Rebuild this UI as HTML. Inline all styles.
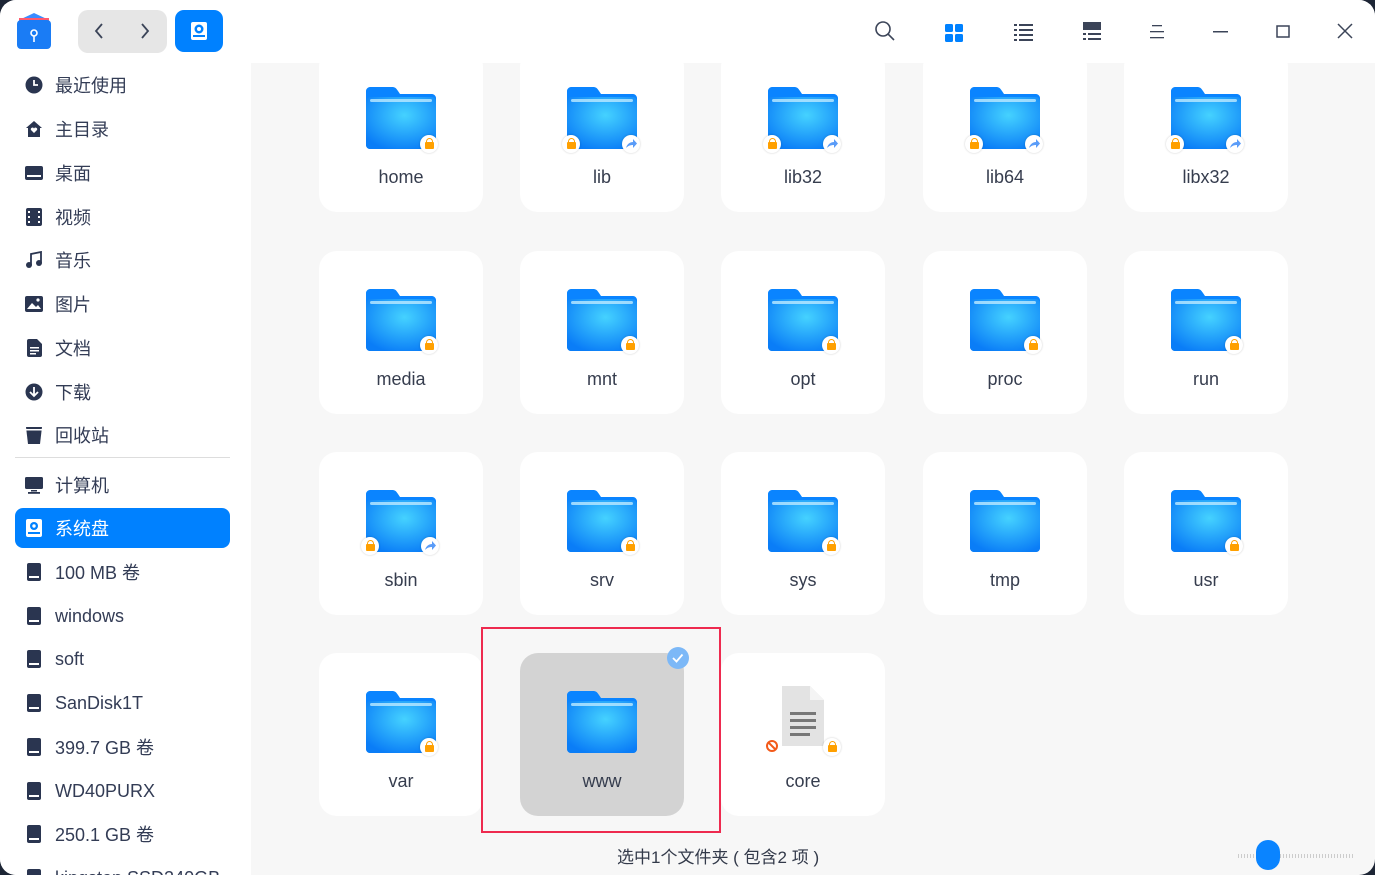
<!DOCTYPE html>
<html><head><meta charset="utf-8">
<style>
*{margin:0;padding:0;box-sizing:border-box}
html,body{width:1375px;height:875px;overflow:hidden;background:#1d2535;font-family:"Liberation Sans","Noto Sans CJK SC",sans-serif}
.win{position:absolute;left:0;top:0;width:1375px;height:875px;background:#f7f7f7;border-radius:16px;overflow:hidden}
.top{position:absolute;left:0;top:0;width:1375px;height:63px;background:#fff}
.side{position:absolute;left:0;top:63px;width:251px;height:812px;background:#fff}
.it{position:absolute;left:15px;width:215px;height:40px;display:flex;align-items:center;font-size:18px;color:#333c55}
.it .ic{width:18px;height:18px;margin-left:10px;margin-right:12px;display:flex;align-items:center;justify-content:center}
.it.sel{background:#0081ff;color:#fff;border-radius:8px}
.main{position:absolute;left:251px;top:63px;width:1124px;height:812px;overflow:hidden}
.card{position:absolute;width:164px;height:163px;background:#fff;border-radius:18px}
.card svg.f{position:absolute;left:47px;top:38px}
.card .l{position:absolute;left:0;width:164px;top:118px;text-align:center;font-size:18px;color:#363d4e}
.lock{position:absolute;width:18px;height:18px;border-radius:50%;background:#fff;box-shadow:0 0 2px rgba(0,0,0,.2)}
.lock:before{content:"";position:absolute;left:5px;top:7px;width:9px;height:7px;background:#ffa000;border-radius:1px}
.lock:after{content:"";position:absolute;left:6px;top:3px;width:5px;height:5px;border:1.5px solid #ffa000;border-bottom:none;border-radius:4px 4px 0 0}
.lnk{position:absolute;width:18px;height:18px;border-radius:50%;background:#fff;box-shadow:0 0 2px rgba(0,0,0,.2)}
</style></head><body>
<svg width="0" height="0" style="position:absolute">
<defs>
<radialGradient id="g" cx="0.55" cy="0.35" r="0.7"><stop offset="0" stop-color="#45d2ff"/><stop offset="1" stop-color="#0a7df7"/></radialGradient>
<symbol id="fold" viewBox="0 0 70 62">
<path d="M4 0h22c3 0 4 1 6 4l2 3h32c2 0 4 2 4 4v47c0 2-2 4-4 4H4c-2 0-4-2-4-4V4c0-2 2-4 4-4z" fill="#0a84ff"/>
<rect x="0" y="10" width="70" height="52" rx="4" fill="url(#g)"/>
<rect x="4" y="12" width="62" height="3" rx="1.5" fill="#bdeaff" opacity=".8"/>
</symbol>
<symbol id="arr" viewBox="0 0 18 18"><path d="M4 13c1-4 4-6 7-6V4l4 4.5-4 4.5v-3c-3 0-5 1-7 3z" fill="#5a9cf8"/></symbol>
</defs></svg>
<div class="win">
<div class="top">
 <svg style="position:absolute;left:16px;top:12px" width="36" height="38" viewBox="0 0 36 38"><path d="M3 8l15-7 15 7z" fill="#3a8cff"/><rect x="3" y="6" width="30" height="4" fill="#ff5a6e"/><rect x="1" y="8" width="34" height="29" rx="4" fill="#1a7cf5"/><circle cx="18" cy="21" r="3" fill="none" stroke="#fff" stroke-width="1.6"/><path d="M18 24v6" stroke="#fff" stroke-width="1.6"/></svg>
 <div style="position:absolute;left:78px;top:10px;width:89px;height:43px;background:#e6e6e6;border-radius:10px"></div>
 <svg style="position:absolute;left:92px;top:22px" width="14" height="18"><path d="M10 2L4 9l6 7" fill="none" stroke="#3b4458" stroke-width="1.8"/></svg>
 <svg style="position:absolute;left:138px;top:22px" width="14" height="18"><path d="M4 2l6 7-6 7" fill="none" stroke="#3b4458" stroke-width="1.8"/></svg>
 <div style="position:absolute;left:175px;top:10px;width:48px;height:42px;background:#0081ff;border-radius:9px"></div>
 <svg style="position:absolute;left:189px;top:21px" width="20" height="20" viewBox="0 0 20 20"><rect x="2" y="1" width="16" height="18" rx="2" fill="#fff"/><circle cx="10" cy="8" r="4.5" fill="#0081ff"/><circle cx="10" cy="8" r="2" fill="#fff"/><rect x="4" y="14" width="12" height="2" fill="#0081ff"/></svg>
 <svg style="position:absolute;left:874px;top:20px" width="22" height="22"><circle cx="9" cy="9" r="7" fill="none" stroke="#3b4458" stroke-width="1.6"/><path d="M14 14l6 6" stroke="#3b4458" stroke-width="1.6"/></svg>
 <svg style="position:absolute;left:945px;top:24px" width="18" height="18"><rect x="0" y="0" width="8" height="8" rx="1.5" fill="#0081ff"/><rect x="10" y="0" width="8" height="8" rx="1.5" fill="#0081ff"/><rect x="0" y="10" width="8" height="8" rx="1.5" fill="#0081ff"/><rect x="10" y="10" width="8" height="8" rx="1.5" fill="#0081ff"/></svg>
 <svg style="position:absolute;left:1014px;top:24px" width="20" height="18" fill="#3b4458"><rect x="0" y="0" width="3" height="2"/><rect x="5" y="0" width="14" height="2"/><rect x="0" y="5" width="3" height="2"/><rect x="5" y="5" width="14" height="2"/><rect x="0" y="10" width="3" height="2"/><rect x="5" y="10" width="14" height="2"/><rect x="0" y="15" width="3" height="2"/><rect x="5" y="15" width="14" height="2"/></svg>
 <svg style="position:absolute;left:1083px;top:22px" width="19" height="20" fill="#3b4458"><rect x="0" y="0" width="18" height="8"/><rect x="0" y="11" width="3" height="2"/><rect x="5" y="11" width="13" height="2"/><rect x="0" y="16" width="3" height="2"/><rect x="5" y="16" width="13" height="2"/></svg>
 <svg style="position:absolute;left:1150px;top:25px" width="16" height="14" fill="#3b4458"><rect x="2" y="0" width="10" height="1.3"/><rect x="0" y="6" width="14" height="1.3"/><rect x="0" y="12" width="14" height="1.3"/></svg>
 <svg style="position:absolute;left:1213px;top:31px" width="16" height="3"><rect width="15" height="1.5" fill="#3b4458"/></svg>
 <svg style="position:absolute;left:1276px;top:25px" width="15" height="14"><rect x="1" y="1" width="12" height="11" fill="none" stroke="#3b4458" stroke-width="1.5"/></svg>
 <svg style="position:absolute;left:1337px;top:23px" width="16" height="16"><path d="M1 1l14 14M15 1L1 15" stroke="#3b4458" stroke-width="1.5"/></svg>
</div>
<div class="side">
 <div class="it" style="top:2px"><span class="ic"><svg width="18" height="18"><circle cx="9" cy="9" r="8.5" fill="#2a3550"/><path d="M9 4v5h4" stroke="#fff" stroke-width="1.8" fill="none"/></svg></span>最近使用</div>
 <div class="it" style="top:46px"><span class="ic"><svg width="18" height="18"><path d="M9 1l8 7h-2v9H3V8H1z" fill="#2a3550"/><path d="M9 13l-3-3a1.5 1.5 0 013-1.5a1.5 1.5 0 013 1.5z" fill="#fff"/></svg></span>主目录</div>
 <div class="it" style="top:90px"><span class="ic"><svg width="18" height="16"><rect x="0" y="1" width="18" height="14" rx="2" fill="#2a3550"/><rect x="2" y="10" width="14" height="2" fill="#fff"/></svg></span>桌面</div>
 <div class="it" style="top:134px"><span class="ic"><svg width="16" height="18"><rect x="0" y="0" width="16" height="18" rx="2" fill="#2a3550"/><g fill="#fff"><rect x="2" y="3" width="2" height="2"/><rect x="2" y="8" width="2" height="2"/><rect x="2" y="13" width="2" height="2"/><rect x="12" y="3" width="2" height="2"/><rect x="12" y="8" width="2" height="2"/><rect x="12" y="13" width="2" height="2"/></g></svg></span>视频</div>
 <div class="it" style="top:177px"><span class="ic"><svg width="18" height="18"><path d="M6 14V3l10-2v11" stroke="#2a3550" stroke-width="1.8" fill="none"/><circle cx="4" cy="14" r="3" fill="#2a3550"/><circle cx="14" cy="12" r="3" fill="#2a3550"/></svg></span>音乐</div>
 <div class="it" style="top:221px"><span class="ic"><svg width="18" height="16"><rect x="0" y="0" width="18" height="16" rx="2" fill="#2a3550"/><path d="M2 13l5-6 4 4 2-2 3 4z" fill="#fff"/><circle cx="13" cy="4" r="1.6" fill="#fff"/></svg></span>图片</div>
 <div class="it" style="top:265px"><span class="ic"><svg width="15" height="18"><path d="M0 2a2 2 0 012-2h8l5 5v11a2 2 0 01-2 2H2a2 2 0 01-2-2z" fill="#2a3550"/><g fill="#fff"><rect x="3" y="8" width="9" height="1.5"/><rect x="3" y="11" width="9" height="1.5"/><rect x="3" y="14" width="6" height="1.5"/></g></svg></span>文档</div>
 <div class="it" style="top:309px"><span class="ic"><svg width="18" height="18"><circle cx="9" cy="9" r="8.5" fill="#2a3550"/><path d="M9 4v8M5 9l4 4 4-4" stroke="#fff" stroke-width="1.8" fill="none"/></svg></span>下载</div>
 <div class="it" style="top:352px"><span class="ic"><svg width="16" height="18"><path d="M0 1h16l-2 17H2z" fill="#2a3550"/><rect x="0" y="3" width="16" height="1.5" fill="#fff"/></svg></span>回收站</div>
 <div style="position:absolute;left:15px;top:394px;width:215px;height:1px;background:#ddd"></div>
 <div class="it" style="top:402px"><span class="ic"><svg width="18" height="17"><rect x="0" y="0" width="18" height="12" rx="1.5" fill="#2a3550"/><rect x="6" y="13" width="6" height="1.5" fill="#2a3550"/><rect x="3" y="15" width="12" height="1.8" fill="#2a3550"/></svg></span>计算机</div>
 <div class="it sel" style="top:445px"><span class="ic"><svg width="16" height="18"><rect x="0" y="0" width="16" height="18" rx="2" fill="#fff"/><circle cx="8" cy="7" r="4" fill="#0081ff"/><circle cx="8" cy="7" r="1.7" fill="#fff"/><rect x="2" y="13" width="12" height="2" fill="#0081ff"/></svg></span>系统盘</div>
 <div class="it" style="top:489px"><span class="ic"><svg width="14" height="18"><rect x="0" y="0" width="14" height="18" rx="2" fill="#2a3550"/><rect x="2" y="13" width="10" height="2" fill="#fff"/></svg></span>100 MB 卷</div>
 <div class="it" style="top:533px"><span class="ic"><svg width="14" height="18"><rect x="0" y="0" width="14" height="18" rx="2" fill="#2a3550"/><rect x="2" y="13" width="10" height="2" fill="#fff"/></svg></span>windows</div>
 <div class="it" style="top:576px"><span class="ic"><svg width="14" height="18"><rect x="0" y="0" width="14" height="18" rx="2" fill="#2a3550"/><rect x="2" y="13" width="10" height="2" fill="#fff"/></svg></span>soft</div>
 <div class="it" style="top:620px"><span class="ic"><svg width="14" height="18"><rect x="0" y="0" width="14" height="18" rx="2" fill="#2a3550"/><rect x="2" y="13" width="10" height="2" fill="#fff"/></svg></span>SanDisk1T</div>
 <div class="it" style="top:664px"><span class="ic"><svg width="14" height="18"><rect x="0" y="0" width="14" height="18" rx="2" fill="#2a3550"/><rect x="2" y="13" width="10" height="2" fill="#fff"/></svg></span>399.7 GB 卷</div>
 <div class="it" style="top:708px"><span class="ic"><svg width="14" height="18"><rect x="0" y="0" width="14" height="18" rx="2" fill="#2a3550"/><rect x="2" y="13" width="10" height="2" fill="#fff"/></svg></span>WD40PURX</div>
 <div class="it" style="top:751px"><span class="ic"><svg width="14" height="18"><rect x="0" y="0" width="14" height="18" rx="2" fill="#2a3550"/><rect x="2" y="13" width="10" height="2" fill="#fff"/></svg></span>250.1 GB 卷</div>
 <div class="it" style="top:795px"><span class="ic"><svg width="14" height="18"><rect x="0" y="0" width="14" height="18" rx="2" fill="#2a3550"/></svg></span>kingston SSD240GB</div>
</div>
<div class="main">
 <div class="card" style="left:68px;top:-14px"><svg class="f" width="70" height="62"><use href="#fold"/></svg><div class="lock" style="left:101px;top:86px"></div><div class="l">home</div></div>
 <div class="card" style="left:269px;top:-14px"><svg class="f" width="70" height="62"><use href="#fold"/></svg><div class="lock" style="left:42px;top:86px"></div><svg class="lnk" style="left:102px;top:86px"><use href="#arr"/></svg><div class="l">lib</div></div>
 <div class="card" style="left:470px;top:-14px"><svg class="f" width="70" height="62"><use href="#fold"/></svg><div class="lock" style="left:42px;top:86px"></div><svg class="lnk" style="left:102px;top:86px"><use href="#arr"/></svg><div class="l">lib32</div></div>
 <div class="card" style="left:672px;top:-14px"><svg class="f" width="70" height="62"><use href="#fold"/></svg><div class="lock" style="left:42px;top:86px"></div><svg class="lnk" style="left:102px;top:86px"><use href="#arr"/></svg><div class="l">lib64</div></div>
 <div class="card" style="left:873px;top:-14px"><svg class="f" width="70" height="62"><use href="#fold"/></svg><div class="lock" style="left:42px;top:86px"></div><svg class="lnk" style="left:102px;top:86px"><use href="#arr"/></svg><div class="l">libx32</div></div>
 <div class="card" style="left:68px;top:188px"><svg class="f" width="70" height="62"><use href="#fold"/></svg><div class="lock" style="left:101px;top:85px"></div><div class="l">media</div></div>
 <div class="card" style="left:269px;top:188px"><svg class="f" width="70" height="62"><use href="#fold"/></svg><div class="lock" style="left:101px;top:85px"></div><div class="l">mnt</div></div>
 <div class="card" style="left:470px;top:188px"><svg class="f" width="70" height="62"><use href="#fold"/></svg><div class="lock" style="left:101px;top:85px"></div><div class="l">opt</div></div>
 <div class="card" style="left:672px;top:188px"><svg class="f" width="70" height="62"><use href="#fold"/></svg><div class="lock" style="left:101px;top:85px"></div><div class="l">proc</div></div>
 <div class="card" style="left:873px;top:188px"><svg class="f" width="70" height="62"><use href="#fold"/></svg><div class="lock" style="left:101px;top:85px"></div><div class="l">run</div></div>
 <div class="card" style="left:68px;top:389px"><svg class="f" width="70" height="62"><use href="#fold"/></svg><div class="lock" style="left:42px;top:85px"></div><svg class="lnk" style="left:102px;top:85px"><use href="#arr"/></svg><div class="l">sbin</div></div>
 <div class="card" style="left:269px;top:389px"><svg class="f" width="70" height="62"><use href="#fold"/></svg><div class="lock" style="left:101px;top:85px"></div><div class="l">srv</div></div>
 <div class="card" style="left:470px;top:389px"><svg class="f" width="70" height="62"><use href="#fold"/></svg><div class="lock" style="left:101px;top:85px"></div><div class="l">sys</div></div>
 <div class="card" style="left:672px;top:389px"><svg class="f" width="70" height="62"><use href="#fold"/></svg><div class="l">tmp</div></div>
 <div class="card" style="left:873px;top:389px"><svg class="f" width="70" height="62"><use href="#fold"/></svg><div class="lock" style="left:101px;top:85px"></div><div class="l">usr</div></div>
 <div class="card" style="left:68px;top:590px"><svg class="f" width="70" height="62"><use href="#fold"/></svg><div class="lock" style="left:101px;top:85px"></div><div class="l">var</div></div>
 <div class="card" style="left:269px;top:590px;background:#d3d3d3"><svg class="f" width="70" height="62"><use href="#fold"/></svg><div class="l">www</div></div>
 <div style="position:absolute;left:416px;top:584px;width:22px;height:22px;border-radius:50%;background:#7cb8f7"><svg width="22" height="22"><path d="M6 11l3.5 3.5 6-7" stroke="#fff" stroke-width="1.8" fill="none"/></svg></div>
 <div style="position:absolute;left:230px;top:564px;width:240px;height:206px;border:2px solid #ee2a4f"></div>
 <div class="card" style="left:470px;top:590px">
  <svg style="position:absolute;left:57px;top:31px" width="50" height="66" viewBox="0 0 50 66"><path d="M4 2h28l14 14v46H4z" fill="#e3e3e3"/><path d="M32 2v14h14z" fill="#f4f4f4"/><g fill="#777"><rect x="12" y="28" width="26" height="3"/><rect x="12" y="35" width="26" height="3"/><rect x="12" y="42" width="26" height="3"/><rect x="12" y="49" width="20" height="3"/></g></svg>
  <div style="position:absolute;left:42px;top:84px;width:18px;height:18px;border-radius:50%;background:#fff"><svg width="18" height="18"><circle cx="9" cy="9" r="5" fill="none" stroke="#f35a1a" stroke-width="2"/><path d="M5.5 5.5l7 7" stroke="#f35a1a" stroke-width="2"/></svg></div>
  <div class="lock" style="left:102px;top:85px"></div>
  <div class="l">core</div></div>
 <div style="position:absolute;left:366px;top:780px;font-size:17px;color:#333a4a">选中1个文件夹 ( 包含2 项 )</div>
 <div style="position:absolute;left:987px;top:791px;width:115px;height:4px;background:repeating-linear-gradient(90deg,#ccc 0 1px,transparent 1px 3px)"></div>
 <div style="position:absolute;left:1005px;top:777px;width:24px;height:30px;border-radius:12px;background:#0a84ff"></div>
</div>
</div>
</body></html>
